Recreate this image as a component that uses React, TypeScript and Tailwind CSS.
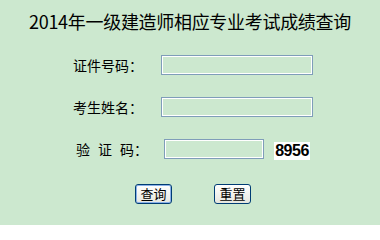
import React from "react";

const cjk = "font-['SimSun','Noto_Sans_CJK_SC',sans-serif]";

const Field = ({ width }: { width: string }) => (
  <input
    type="text"
    className={`${width} h-[20px] border border-[#7f9db9] bg-transparent shadow-[inset_0_0_0_1px_#ffffff] outline-none`}
  />
);

const XpButton = ({ label, focused }: { label: string; focused?: boolean }) => (
  <button
    className={`w-[37px] h-[20px] rounded-[3px] border border-[#003c74] bg-gradient-to-b from-[#ffffff] to-[#e6e6df] text-[13px] leading-none text-black ${cjk} ${
      focused ? "shadow-[inset_0_0_0_1px_#8ab0e8]" : ""
    }`}
  >
    {label}
  </button>
);

export default function App() {
  return (
    <div className={`w-[380px] h-[225px] bg-[#cce8cf] text-black ${cjk}`}>
      <div className="pt-[12px] h-[30px] text-center text-[18px] leading-[18px] tracking-[-0.3px]">
        2014年一级建造师相应专业考试成绩查询
      </div>

      <div className="mt-[25px] flex flex-col gap-[22px]">
        <div className="flex items-center h-[20px]">
          <span className="ml-[73px] w-[88px] text-[14px] leading-none">证件号码：</span>
          <Field width="w-[152px]" />
        </div>
        <div className="flex items-center h-[20px]">
          <span className="ml-[73px] w-[88px] text-[14px] leading-none">考生姓名：</span>
          <Field width="w-[152px]" />
        </div>
        <div className="flex items-center h-[20px]">
          <span className="ml-[76px] w-[88px] flex gap-[8px] text-[14px] leading-none">
            <span>验</span>
            <span>证</span>
            <span>码：</span>
          </span>
          <Field width="w-[100px]" />
          <span className="ml-[10px] mt-[4px] w-[36px] h-[18px] bg-white flex items-center justify-center font-['Liberation_Sans',sans-serif] font-bold text-[16px] leading-none tracking-[-0.5px]">
            8956
          </span>
        </div>
      </div>

      <div className="mt-[21px] flex">
        <div className="ml-[135px]">
          <XpButton label="查询" focused />
        </div>
        <div className="ml-[42px]">
          <XpButton label="重置" />
        </div>
      </div>
    </div>
  );
}
